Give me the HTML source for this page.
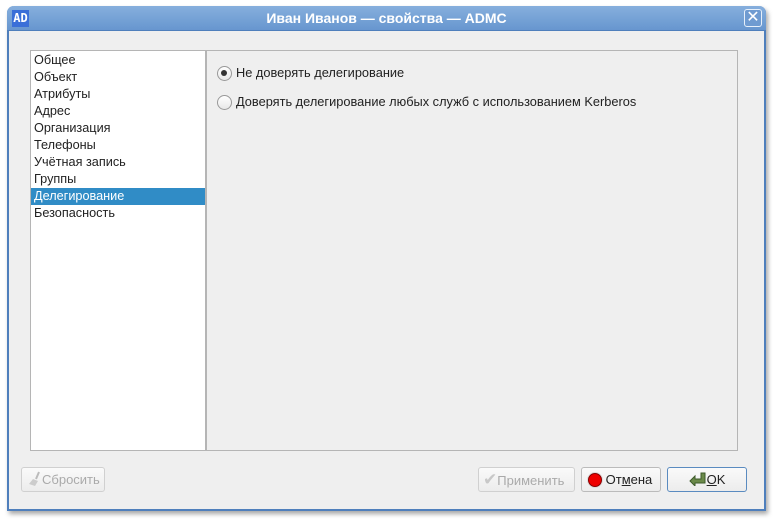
<!DOCTYPE html>
<html><head><meta charset="utf-8"><style>
*{margin:0;padding:0;box-sizing:border-box}
body{width:774px;height:520px;background:#fff;font-family:"Liberation Sans","DejaVu Sans",sans-serif;font-size:12.7px;position:relative;overflow:hidden}
.win{position:absolute;left:7px;top:6px;width:759px;height:505px;border:2px solid #4f7fbc;border-top:none;border-radius:7px 7px 0 0;background:#efefef;box-shadow:2px 3px 5px rgba(0,0,0,.35)}
.title{position:absolute;height:25px;background:linear-gradient(#86afdd,#6796cf);border-radius:7px 7px 0 0;border-bottom:1px solid #4f7fbc;color:#fff;font-weight:bold;font-size:14px;text-align:center;line-height:25px}
.ad{position:absolute;left:5px;top:4px;width:17px;height:17px;background:#3a6fd8;color:#fff;font-size:12px;line-height:17px;font-weight:bold;text-align:center;font-family:"DejaVu Sans Mono",monospace}
.x{position:absolute;right:4px;top:3px;width:18px;height:18px;border:1px solid #e6effa;border-radius:3px;background:#6f9bd1;color:#fff;font-size:16px;line-height:16px;text-align:center}
.list{position:absolute;left:30px;top:50px;width:176px;height:401px;background:#fff;border:1px solid #b5b5b5;padding-top:1px}
.list div{height:17px;line-height:17px;padding-left:3px;color:#222}
.list .sel{background:#308cc6;color:#fff}
.panel{position:absolute;left:206px;top:50px;width:532px;height:401px;border:1px solid #b5b5b5;background:#efefef}
.r{position:absolute;left:217px;color:#222;padding-left:19px;line-height:14px;font-size:12.8px}
.r:before{content:"";position:absolute;left:0;top:0;width:13px;height:13px;border:1px solid #999;border-radius:50%;background:linear-gradient(#fff,#e8e8e8)}
.r.on:after{content:"";position:absolute;left:4px;top:4px;width:6px;height:6px;border-radius:50%;background:#333}
.b{position:absolute;top:467px;height:25px;border:1px solid #bbb;border-radius:3px;background:linear-gradient(#fafafa,#ececec);line-height:23px;color:#222;font-size:13px}
.dis{color:#aaa;border-color:#d0d0d0}
</style></head><body>
<div class="win"></div>
<div class="title" style="left:7px;top:6px;width:759px">Иван Иванов — свойства — ADMC
<div class="ad">AD</div><div class="x">✕</div></div>
<div class="list">
<div>Общее</div><div>Объект</div><div>Атрибуты</div><div>Адрес</div><div>Организация</div><div>Телефоны</div><div>Учётная запись</div><div>Группы</div><div class="sel">Делегирование</div><div>Безопасность</div>
</div>
<div class="panel"></div>
<div class="r on" style="top:66px">Не доверять делегирование</div>
<div class="r" style="top:95px">Доверять делегирование любых служб с использованием Kerberos</div>
<div class="b dis" style="left:21px;width:84px;padding-left:6px"><svg width="14" height="16" viewBox="0 0 14 16" style="vertical-align:-3px"><path d="M11 1 L8 8" stroke="#bbb" stroke-width="2"/><path d="M5 8 L10 10 L7 15 L1 13 Z" fill="#ccc"/></svg>Сбросить</div>
<div class="b dis" style="left:478px;width:97px;padding-left:4px"><span style="color:#c8c8c8;font-size:17px">✔</span>Применить</div>
<div class="b" style="left:581px;width:80px;padding-left:6px"><span style="display:inline-block;width:14px;height:14px;border-radius:50%;background:#e00;border:1px solid #800;vertical-align:-3px;box-shadow:0 0 0 1px #ddd"></span> От<u>м</u>ена</div>
<div class="b" style="left:667px;width:80px;border-color:#5a8bc0;text-align:center"><svg width="18" height="14" viewBox="0 0 18 14" style="vertical-align:-2px"><path d="M1 9 L6 4 L6 7 L12 7 L12 1 L16 1 L16 11 L6 11 L6 14 Z" fill="#6b8a4a" stroke="#3d5a2a" stroke-width="1"/></svg><u>O</u>K</div>
</body></html>
